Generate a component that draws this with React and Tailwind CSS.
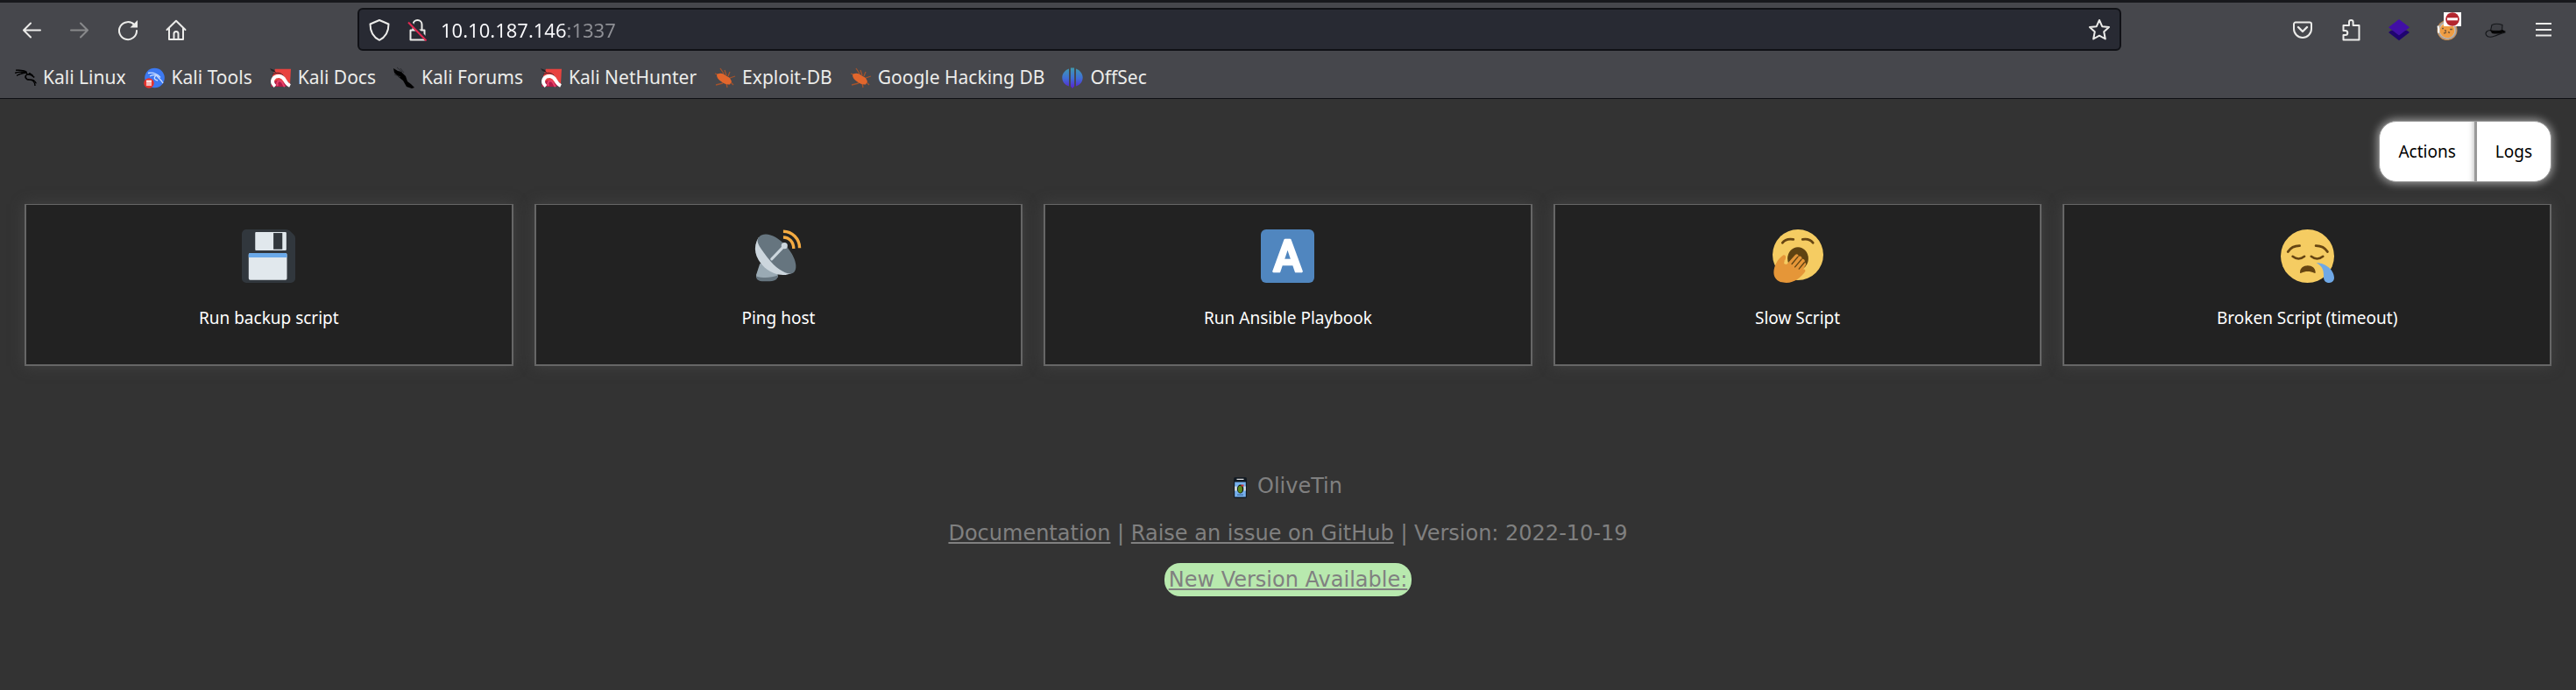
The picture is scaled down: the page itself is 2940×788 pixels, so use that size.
import { SiKalilinux } from "react-icons/si";

const line = {
  fill: "none",
  stroke: "currentColor",
  strokeWidth: 2,
  strokeLinecap: "round",
  strokeLinejoin: "round",
};

function Icon({ children, className = "size-6" }) {
  return (
    <svg viewBox="0 0 24 24" className={`${className} shrink-0 overflow-visible`} aria-hidden="true">
      {children}
    </svg>
  );
}

const Back = () => (
  <Icon><path {...line} d="M22 12.500H3M11 4.500L3 12.500l8 8" /></Icon>
);
const Forward = () => (
  <Icon><path {...line} d="M2 12.500h19M13 4.500l8 8-8 8" /></Icon>
);
const Reload = () => (
  <Icon>
    <path {...line} d="M19.500 6.500A10 10 0 1 0 22 13" />
    <path fill="currentColor" d="M23 1v8.500h-8.500z" />
  </Icon>
);
const Home = () => (
  <Icon>
    <path {...line} d="M1.500 12L12 1.800 22.500 12M4 10v13h16V10" />
    <path {...line} d="M9.500 23v-6.500a2.500 2.500 0 0 1 5 0V23" />
  </Icon>
);
const Shield = () => (
  <Icon>
    <path {...line} d="M12 1l10.500 4.500C22.500 14 19 20.500 12 23.800 5 20.500 1.500 14 1.500 5.500z" />
  </Icon>
);
const BrokenLock = () => (
  <Icon>
    <path {...line} d="M4.500 12.500h16v11h-16zM7.500 12V6a5 5 0 0 1 10 0v6" />
    <path fill="none" stroke="#282a33" strokeWidth="4" d="M3 3l21 21" />
    <path fill="none" stroke="#e22850" strokeWidth="2" d="M2 3.500L22.500 24.500" />
  </Icon>
);
const Star = () => (
  <Icon>
    <path {...line} d="M12 1l3.200 7.200 7.800.8-5.800 5.300 1.600 8.200L12 18.700l-6.800 3.800 1.600-8.200L1 9l7.800-.8z" />
  </Icon>
);
const Pocket = () => (
  <Icon>
    <path {...line} d="M4 3.500h16a2 2 0 0 1 2 2V11a10 10 0 0 1-20 0V5.500a2 2 0 0 1 2-2z" />
    <path {...line} strokeWidth="2.400" d="M7 9l5 5 5-5" />
  </Icon>
);
const Puzzle = () => (
  <Icon>
    <path {...line} d="M3.500 7H10V3.200a2.300 2.300 0 0 1 4.600 0V7h6.900v16.500h-18V18h2.300a2.500 2.500 0 0 0 0-5H3.500z" />
  </Icon>
);
const Stack = () => (
  <Icon>
    <path fill="#1f056f" d="M0 15l3-2.300h18L24 15 12 24.300z" />
    <path fill="#410fa6" d="M12 0l12 9.300-12 9.300L0 9.300z" />
  </Icon>
);
const Cookie = () => (
  <span className="relative block size-6">
    <Icon>
      <circle cx="12" cy="12.500" r="11.500" fill="#c98b4b" />
      <circle cx="12" cy="12.500" r="9.800" fill="#e6c9a4" stroke="#a8a8ac" strokeWidth="1.600" />
      <circle cx="12" cy="13" r="8.300" fill="#ef9d43" />
      <path fill="none" stroke="#fff" strokeWidth="2" d="M1.500 7.500q1 4 .5 8" />
      <path fill="none" stroke="#7a5a3a" strokeWidth="1.400" d="M6 10.500h2M9 12.500l2 1M15 11.500h3M8 16l3-1M13 14.500l2 1" />
    </Icon>
    <span className="absolute -top-2 left-2 flex h-4 w-5 items-center justify-center bg-white">
      <svg viewBox="0 0 16 16" className="size-4" aria-hidden="true">
        <circle cx="8" cy="8" r="7.800" fill="#b3262f" />
        <path fill="#fff" d="M2 6.300h12v3H2z" />
      </svg>
    </span>
  </span>
);
const Hat = () => (
  <Icon>
    <path fill="none" stroke="#15171a" strokeWidth="1.200" d="M6 12.500C2 13 0 15.500 1.500 18s6 2.500 10 1 6-2.800 12-4" />
    <path fill="#3f4045" stroke="#15171a" strokeWidth="1.100" d="M6.500 13L8 6.500c3-1.500 8-1.500 12 0l-.5 7z" />
    <path fill="#050505" d="M6 12c4 1.600 9 1.600 14 0l4 2c-3 2-10 3.500-16 2z" />
  </Icon>
);
const Menu = () => (
  <Icon><path fill="none" stroke="currentColor" strokeWidth="2" d="M3 5h18M3 12h18M3 18.500h18" /></Icon>
);

const ToolsMark = () => (
  <Icon>
    <circle cx="12.500" cy="12" r="11.300" fill="#3c79f2" />
    <path fill="none" stroke="#cfe0ff" strokeWidth="1.300" d="M5 6.500c5-1 10 .5 14 5M7 10c4-2 8-1.500 10 2 2 2 4 3 5 6M14 9c-3 3-2 5 2 6" />
    <circle cx="6" cy="18" r="5.800" fill="#e5342f" />
    <path fill="none" stroke="#fff" strokeWidth="1.300" d="M3 15.500h6M4 16v5M6 16v5M8 16v5" />
  </Icon>
);
const DocsMark = () => (
  <Icon>
    <path fill="#e8433f" d="M6 1.800h18l-1 18H4L3 10z" />
    <path fill="#b01c46" d="M1 22l1-5 9-3 10 7-6 1z" />
    <path fill="none" stroke="#3a2028" strokeWidth="1" d="M3 8c5-3 11-2 13 3 1 3 3 5 6 7" />
    <path fill="none" stroke="#fff" strokeWidth="4" d="M6 21.500C0 16 4 9.500 11 10c7.500 1 4.500 7.500 12 11" />
    <path fill="none" stroke="#e8436a" strokeWidth="2" d="M9 21c-2-4 1-7.500 4-5 2 1.500 2 4 4 6" />
    <path fill="#232326" d="M0 1l5 2 2 3-5-2z" />
  </Icon>
);
const ForumsMark = () => (
  <Icon>
    <path fill="#000" d="M0 1l5 3 4 1 5 5 2 6 4 3 4 4-3 1-6-2-4-7-5-4-5-5z" />
    <path fill="none" stroke="#2c2d31" strokeWidth="1" d="M4 0l6 5M8 1l4 5M1 8l7 3" />
  </Icon>
);
const BugMark = () => (
  <Icon>
    <path fill="none" stroke="#a3532c" strokeWidth="1.300" d="M7 1l4 6M12 3l2 6M1 7l6 2M24 10l-6 2M2 20l8-2M22 20l-4-4M15 23l-1-5M18 5l-2 5" />
    <path fill="#e2662c" d="M3 8c4-2 7-1.500 10 1l5 3 2 4-2 3.500c-4 .5-7-1-10-3.500-3-2-5-4-5-8z" />
  </Icon>
);
const OffSecMark = () => (
  <Icon>
    <defs>
      <linearGradient id="offsec" x1="0" y1="0" x2="0" y2="1">
        <stop offset="0" stopColor="#3e9ab0" />
        <stop offset=".5" stopColor="#3f6fd6" />
        <stop offset="1" stopColor="#5a1fd0" />
      </linearGradient>
    </defs>
    <path fill="url(#offsec)" d="M8 1.500v20C3 20 .3 16 .3 11.500S3.500 3 8 1.500zM16 1.500v20c5-1.500 7.700-5.500 7.700-10S20.500 3 16 1.500zM9.800.5h4.400v21L12 24l-2.200-2.500z" />
    <path stroke="#46474c" strokeWidth="1.200" d="M9 0v22M15 0v22" />
  </Icon>
);
const KaliMark = () => (
  <SiKalilinux className="size-6 shrink-0 overflow-visible stroke-black stroke-1 text-black" aria-hidden="true" />
);

function Emoji({ children }) {
  return (
    <svg viewBox="0 0 36 36" className="size-[61px] overflow-visible" aria-hidden="true">
      {children}
    </svg>
  );
}

const Floppy = () => (
  <Emoji>
    <path fill="#31373d" d="M3 0h26c2 0 3 .6 4 1.600l1.400 1.400c1 1 1.600 1.500 1.600 3V33a3 3 0 0 1-3 3H3a3 3 0 0 1-3-3V3a3 3 0 0 1 3-3z" />
    <rect x="9" y="1.800" width="21" height="12.300" rx=".6" fill="#e1e8ed" />
    <rect x="21.300" y="2.400" width="6" height="11" fill="#31373d" />
    <rect x="4.600" y="15.900" width="25.800" height="18.200" rx="1" fill="#e1e8ed" />
    <path fill="#6ba9e9" d="M5.600 15.900h23.800a1 1 0 0 1 1 1v2H4.600v-2a1 1 0 0 1 1-1z" />
  </Emoji>
);
const Satellite = () => (
  <Emoji>
    <path fill="#9aaab4" d="M5.500 23L3 30.500v2h14.500V29L12 24z" />
    <path fill="#66757f" d="M3 31.500c4 1.300 10 1.300 14.500-.5 0 3-2 4-7.200 4S3 34.500 3 31.500z" />
    <path fill="#ccd6dd" d="M4.500 5.500C.5 12 2 19.500 8.500 25.500c6 5.500 14 6.500 19 3.500z" />
    <path fill="#66757f" d="M5 5c4-4 12-.5 18 6s8.500 14.500 5.500 17.800S16.500 27 11 19.500 2 8 5 5z" />
    <path stroke="#ccd6dd" strokeWidth="1.800" strokeLinecap="round" d="M13.400 20L22 11" />
    <circle cx="22" cy="11" r="2.100" fill="#ccd6dd" />
    <path fill="none" stroke="#f4ab42" strokeWidth="2" d="M21.200 1.300c6 0 11 5 11 11.200M21.200 5.300c4 0 7 3.300 7 7.700" />
  </Emoji>
);
const LetterA = () => (
  <Emoji>
    <rect width="36" height="36" rx="3.500" fill="#5086bf" />
    <text x="18" y="28.300" textAnchor="middle" fontFamily="Roboto, sans-serif" fontSize="29" fontWeight="500" fill="#fff" stroke="#fff" strokeWidth="1.600" strokeLinejoin="round">A</text>
  </Emoji>
);
const Yawn = () => (
  <Emoji>
    <circle cx="18.300" cy="17.100" r="17.100" fill="#f5cc62" />
    <path fill="none" stroke="#664512" strokeWidth="1.700" strokeLinecap="round" d="M7.900 9c1.500-2.200 4.500-2.700 7.300-2.300M28.400 9c-1.500-2.200-4.300-2.700-7-2.300" />
    <ellipse cx="18.300" cy="19.600" rx="7" ry="7.700" fill="#5f4312" />
    <path fill="#e59638" d="M2 29c0-4.500 3-9.500 6.300-11.600 1.800-.6 2.200 1.300 1.400 3L9.200 23l1.600.5 5.700-6.400c1.200-1.200 2.600 0 1.900 1.300 1.600-1.100 3 .2 2.300 1.700 1.500-.7 2.700.6 2 2 1 .2 1.200 1.300.6 2.200l-1.500 2.400c1.300 0 1.800 1 1.200 1.900-2 3-7 7.400-12.500 7.400-5 0-8.500-2.700-8.500-7z" />
    <path fill="none" stroke="#5f4312" strokeWidth=".8" strokeLinecap="round" d="M18.200 18.500l-4 4.800M20.600 20.300l-4.300 5M22.600 22.300l-3.600 4.300" />
    <path fill="#f5cc62" d="M9.300 20.500l1.600.8-.3 2.200-1.600-.3z" />
  </Emoji>
);
const Sleepy = () => (
  <Emoji>
    <circle cx="18" cy="18" r="18" fill="#f5cc62" />
    <path fill="none" stroke="#664512" strokeWidth="1.700" strokeLinecap="round" d="M4.900 15c1.800-2.800 4.600-4 7.800-4M31.500 15c-1.800-2.800-4.600-4-7.800-4" />
    <path fill="none" stroke="#664512" strokeWidth="1.500" strokeLinecap="round" d="M8 18.200c2.500 2 5.500 2 8 0M20.500 18.200c2.500 2 5.500 2 8 0" />
    <path fill="#664512" d="M13 29c0-2.800 2.300-4.600 5.200-4.600s5.200 1.800 5.200 4.600c0 .5-.4.600-.8.400-2.800-1.400-6-1.400-8.800 0-.4.200-.8.100-.8-.4z" />
    <path fill="#6fa8e6" d="M24 22.600c6-.3 12 4.900 12 9.900 0 2.200-1.400 3.500-3.300 3.500-2.500 0-3.800-1.500-3.800-4 .1-4-.4-7-4.900-9.400z" />
  </Emoji>
);

const Tin = () => (
  <svg viewBox="0 0 15 24" className="mt-1 h-6 w-[15px]" aria-hidden="true">
    <rect width="15" height="24" rx="2" fill="#121a22" />
    <rect x="1.200" y="5.500" width="12.600" height="17" fill="#77b1ee" />
    <path fill="#d9dbdc" d="M3.500 1.800h8v1.200h-8zM1.200 10.500h2.500v5H1.200zM11.500 10.500h2.300v5h-2.300z" />
    <ellipse cx="7.600" cy="13.500" rx="3.600" ry="5" fill="#101608" />
    <ellipse cx="7.400" cy="13.700" rx="2.500" ry="4" fill="#5d8a1c" />
    <path fill="#c33" d="M8.500 8.500h3v2h-3z" />
    <path fill="#3d6da5" d="M4 19.500h7v1.200H4z" />
  </svg>
);

const bookmarks = [
  ["Kali Linux", KaliMark],
  ["Kali Tools", ToolsMark],
  ["Kali Docs", DocsMark],
  ["Kali Forums", ForumsMark],
  ["Kali NetHunter", DocsMark],
  ["Exploit-DB", BugMark],
  ["Google Hacking DB", BugMark],
  ["OffSec", OffSecMark],
];

const actions = [
  ["Run backup script", Floppy],
  ["Ping host", Satellite],
  ["Run Ansible Playbook", LetterA],
  ["Slow Script", Yawn],
  ["Broken Script (timeout)", Sleepy],
];

const tools = [
  ["Save to Pocket", Pocket],
  ["Extensions", Puzzle],
  ["Layers", Stack],
  ["Cookie editor", Cookie],
  ["Hat", Hat],
  ["Menu", Menu],
];

function ToolButton({ label, children, disabled }) {
  return (
    <button type="button" aria-label={label} disabled={disabled} className="flex size-6 shrink-0 items-center justify-center disabled:opacity-40">
      {children}
    </button>
  );
}

function BrowserBar() {
  return (
    <header className="border-t-3 border-b border-t-[#17181c] border-b-[#0f1014] bg-[#46474c] text-[#ececea]">
      <div className="flex items-center pt-1.5 pr-[25px] pl-6">
        <div className="flex gap-[31px]">
          <ToolButton label="Back"><Back /></ToolButton>
          <ToolButton label="Forward" disabled><Forward /></ToolButton>
          <ToolButton label="Reload"><Reload /></ToolButton>
          <ToolButton label="Home"><Home /></ToolButton>
        </div>
        <div className="mx-[195px] flex h-[49px] min-w-0 flex-1 items-center rounded-md border-2 border-[#101116] bg-[#282a33] px-[11px]">
          <div className="flex gap-[19px]">
            <ToolButton label="Tracking protection"><Shield /></ToolButton>
            <ToolButton label="Connection not secure"><BrokenLock /></ToolButton>
          </div>
          <input
            type="text"
            aria-label="Address"
            defaultValue="10.10.187.146:1337"
            className="ml-[15px] min-w-0 flex-1 bg-[linear-gradient(90deg,#fbfbfe_143px,#8f9096_143px)] bg-clip-text text-[22px] leading-8 text-transparent outline-none"
          />
          <ToolButton label="Bookmark this page"><Star /></ToolButton>
        </div>
        <div className="flex gap-[31px]">
          {tools.map(([label, Glyph]) => (
            <ToolButton key={label} label={label}><Glyph /></ToolButton>
          ))}
        </div>
      </div>
      <nav aria-label="Bookmarks" className="mt-[7px] flex h-[47px] items-center gap-5 px-[17px] text-[21px]">
        {bookmarks.map(([label, Mark]) => (
          <a key={label} href="#" className="flex items-center gap-2 whitespace-nowrap">
            <Mark />
            {label}
          </a>
        ))}
      </nav>
    </header>
  );
}

export default function App() {
  return (
    <div className="min-h-screen bg-[#333333] font-['Noto_Sans',sans-serif]">
      <BrowserBar />
      <main className="px-7 pt-[25px]">
        <div className="flex justify-end">
          <div className="flex h-[70px] overflow-hidden rounded-[20px] border border-[#999999] bg-white text-[19px] text-black shadow-[0_0_10px_2px_#999999]">
            <button type="button" className="border-r-3 border-[#999999] px-[21px] shadow-[inset_-6px_0_6px_-5px_#bbbbbb]">Actions</button>
            <button type="button" className="px-[21px]">Logs</button>
          </div>
        </div>
        <div className="mt-[25px] grid grid-cols-5 gap-6">
          {actions.map(([title, Picture]) => (
            <button
              key={title}
              type="button"
              className="flex flex-col items-center gap-7 border-2 border-t border-[#666666] bg-[#222222] pt-7 pb-[41px] text-[19px] leading-6 text-white shadow-[0_0_14px_0_#444444]"
            >
              <Picture />
              {title}
            </button>
          ))}
        </div>
      </main>
      <footer className="mt-[123px] flex flex-col items-center pb-10 font-['DejaVu_Sans',sans-serif] text-2xl leading-7 text-[#808080]">
        <p className="flex items-center gap-3">
          <Tin />
          OliveTin
        </p>
        <p className="mt-[26px]">
          <a href="#" className="underline">Documentation</a> | <a href="#" className="underline">Raise an issue on GitHub</a> | Version: 2022-10-19
        </p>
        <a href="#" className="mt-5 rounded-[18px] bg-[#b8e9ae] px-[5px] py-[5px] underline">New Version Available:</a>
      </footer>
    </div>
  );
}
